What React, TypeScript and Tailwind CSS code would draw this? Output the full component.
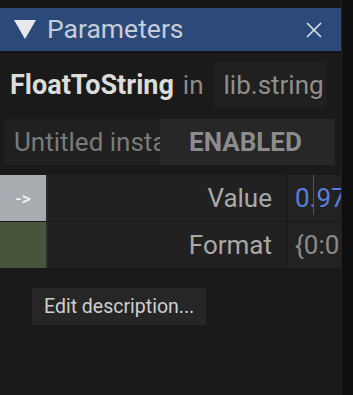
import { X } from 'lucide-react'

function ParamRow({ swatch, swatchText, label, value, valueClass, cursor }: {
  swatch: string
  swatchText?: string
  label: string
  value: string
  valueClass: string
  cursor?: boolean
}) {
  return (
    <div className="flex h-[47px] border-b border-[#181818]">
      <div className={`w-[48px] shrink-0 flex items-center justify-center text-[18px] font-medium text-[#f0f0f0] border-r-2 border-[#2a2a2a] ${swatch}`}>
        {swatchText}
      </div>
      <div className="flex-1 flex items-center justify-end pr-[15px] bg-[#212121] text-[26px] border-r border-[#1a1a1a]">
        <span className="text-[#a8a8a8]">{label}</span>
      </div>
      <div className="w-[53px] shrink-0 relative flex items-center pl-[7px] bg-[#222222] overflow-hidden whitespace-nowrap text-[26px]">
        <span className={valueClass}>{value}</span>
        {cursor && <div className="absolute left-[25px] top-0 bottom-[6px] w-[1px] bg-[#555]" />}
      </div>
    </div>
  )
}

export default function App() {
  return (
    <div className="w-[353px] h-[395px] bg-[#1a1a1a] flex overflow-hidden" style={{ fontFamily: 'Roboto, "Noto Sans", sans-serif' }}>
      <div className="w-[341px] shrink-0 flex flex-col">
        <div className="h-[8px] bg-[#161616]" />
        {/* Header */}
        <div className="h-[43px] bg-[#2b4a7a] flex items-center pl-[14px] pr-[14px] border-b-[3px] border-[#161616] box-content">
          <svg width="22" height="19" viewBox="0 0 22 19" className="mr-[11px]">
            <polygon points="0,0 22,0 11,19" fill="#e6e8ee" />
          </svg>
          <span className="text-[26.5px] text-[#c6cdd9] leading-none">Parameters</span>
          <X className="ml-auto text-[#d8dce4]" size={26} strokeWidth={1.6} />
        </div>

        {/* Operator */}
        <div className="flex items-center mt-[7px] h-[48px] pl-[10px] whitespace-nowrap">
          <span className="text-[27px] font-bold text-[#dcdcdc]">FloatToString</span>
          <span className="text-[26px] text-[#8a8a8a] ml-[9px]">in</span>
          <div className="ml-[10px] w-[112px] shrink-0 h-[46px] bg-[#202020] flex items-center pl-[10px] overflow-hidden whitespace-nowrap">
            <span className="text-[26px] text-[#8f8f8f]">lib.string</span>
          </div>
        </div>

        {/* Instance */}
        <div className="flex mt-[10px] ml-[4px] mr-[6px] h-[46px] bg-[#202020]">
          <div className="w-[156px] flex items-center pl-[10px] overflow-hidden whitespace-nowrap">
            <span className="text-[26px] text-[#7a7a7a]">Untitled insta</span>
          </div>
          <div className="flex-1 bg-[#272727] flex items-center pl-[29px]">
            <span className="text-[26px] font-bold text-[#8c8c8c]">ENABLED</span>
          </div>
        </div>

        {/* Params */}
        <div className="mt-[10px] flex flex-col">
          <ParamRow swatch="bg-[#a6acaf]" swatchText="->" label="Value" value="0.97" valueClass="text-[#5b7ddf]" cursor />
          <ParamRow swatch="bg-[#48553a]" label="Format" value="{0:0.00}" valueClass="text-[#8a8a8a]" />
        </div>

        <div className="mt-[19px] ml-[32px]">
          <div className="inline-flex items-center h-[37px] px-[12px] bg-[#262626]">
            <span className="text-[19.5px] text-[#cfcfcf]">Edit description...</span>
          </div>
        </div>
      </div>
      <div className="flex-1 bg-[#0f0f0f] border-l border-[#222]" />
    </div>
  )
}
